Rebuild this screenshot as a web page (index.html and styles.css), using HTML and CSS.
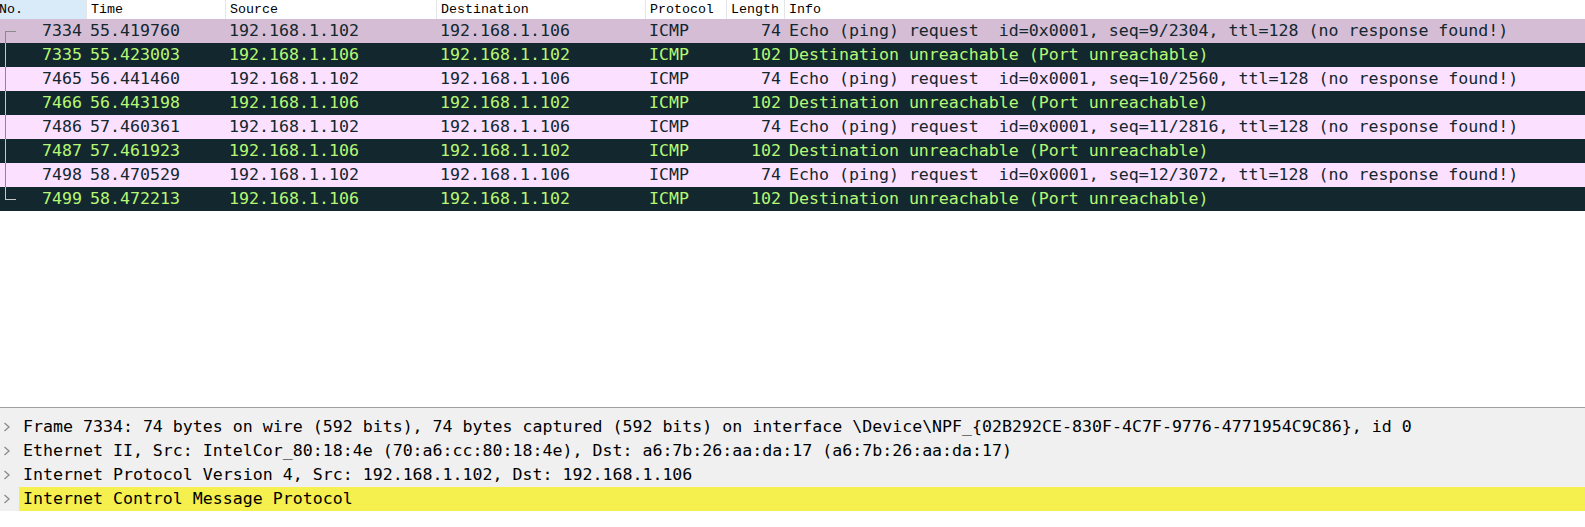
FILE: index.html
```html
<!DOCTYPE html>
<html>
<head>
<meta charset="utf-8">
<link rel="stylesheet" href="styles.css">
</head>
<body>
<div class="app">
  <div class="plist">
    <div class="phead">
      <div class="hc sorted">No.</div>
      <div class="hc">Time</div>
      <div class="hc">Source</div>
      <div class="hc">Destination</div>
      <div class="hc">Protocol</div>
      <div class="hc">Length</div>
      <div class="hc">Info</div>
    </div>
    <div class="prow sel">
      <div class="c num tree-first">7334</div><div class="c">55.419760</div><div class="c">192.168.1.102</div><div class="c">192.168.1.106</div><div class="c">ICMP</div><div class="c len">74</div><div class="c info">Echo (ping) request  id=0x0001, seq=9/2304, ttl=128 (no response found!)</div>
    </div>
    <div class="prow err">
      <div class="c num tree-mid">7335</div><div class="c">55.423003</div><div class="c">192.168.1.106</div><div class="c">192.168.1.102</div><div class="c">ICMP</div><div class="c len">102</div><div class="c info">Destination unreachable (Port unreachable)</div>
    </div>
    <div class="prow icmp">
      <div class="c num tree-mid">7465</div><div class="c">56.441460</div><div class="c">192.168.1.102</div><div class="c">192.168.1.106</div><div class="c">ICMP</div><div class="c len">74</div><div class="c info">Echo (ping) request  id=0x0001, seq=10/2560, ttl=128 (no response found!)</div>
    </div>
    <div class="prow err">
      <div class="c num tree-mid">7466</div><div class="c">56.443198</div><div class="c">192.168.1.106</div><div class="c">192.168.1.102</div><div class="c">ICMP</div><div class="c len">102</div><div class="c info">Destination unreachable (Port unreachable)</div>
    </div>
    <div class="prow icmp">
      <div class="c num tree-mid">7486</div><div class="c">57.460361</div><div class="c">192.168.1.102</div><div class="c">192.168.1.106</div><div class="c">ICMP</div><div class="c len">74</div><div class="c info">Echo (ping) request  id=0x0001, seq=11/2816, ttl=128 (no response found!)</div>
    </div>
    <div class="prow err">
      <div class="c num tree-mid">7487</div><div class="c">57.461923</div><div class="c">192.168.1.106</div><div class="c">192.168.1.102</div><div class="c">ICMP</div><div class="c len">102</div><div class="c info">Destination unreachable (Port unreachable)</div>
    </div>
    <div class="prow icmp">
      <div class="c num tree-mid">7498</div><div class="c">58.470529</div><div class="c">192.168.1.102</div><div class="c">192.168.1.106</div><div class="c">ICMP</div><div class="c len">74</div><div class="c info">Echo (ping) request  id=0x0001, seq=12/3072, ttl=128 (no response found!)</div>
    </div>
    <div class="prow err">
      <div class="c num tree-last">7499</div><div class="c">58.472213</div><div class="c">192.168.1.106</div><div class="c">192.168.1.102</div><div class="c">ICMP</div><div class="c len">102</div><div class="c info">Destination unreachable (Port unreachable)</div>
    </div>
  </div>
  <div class="splitter"></div>
  <div class="details">
    <div class="drow">
      <svg class="chev" width="19" height="24" viewBox="0 0 19 24"><polyline points="4.5,8 9,12 4.5,16" fill="none" stroke="#8a8a8a" stroke-width="1.3"/></svg>
      <span class="dtext">Frame 7334: 74 bytes on wire (592 bits), 74 bytes captured (592 bits) on interface \Device\NPF_{02B292CE-830F-4C7F-9776-4771954C9C86}, id 0</span>
    </div>
    <div class="drow">
      <svg class="chev" width="19" height="24" viewBox="0 0 19 24"><polyline points="4.5,8 9,12 4.5,16" fill="none" stroke="#8a8a8a" stroke-width="1.3"/></svg>
      <span class="dtext">Ethernet II, Src: IntelCor_80:18:4e (70:a6:cc:80:18:4e), Dst: a6:7b:26:aa:da:17 (a6:7b:26:aa:da:17)</span>
    </div>
    <div class="drow">
      <svg class="chev" width="19" height="24" viewBox="0 0 19 24"><polyline points="4.5,8 9,12 4.5,16" fill="none" stroke="#8a8a8a" stroke-width="1.3"/></svg>
      <span class="dtext">Internet Protocol Version 4, Src: 192.168.1.102, Dst: 192.168.1.106</span>
    </div>
    <div class="drow hl">
      <svg class="chev" width="19" height="24" viewBox="0 0 19 24"><polyline points="4.5,8 9,12 4.5,16" fill="none" stroke="#8a8a8a" stroke-width="1.3"/></svg>
      <span class="dtext">Internet Control Message Protocol</span>
    </div>
  </div>
</div>
</body>
</html>
```

FILE: styles.css
```css
html, body {
  margin: 0;
  padding: 0;
  background: #ffffff;
}
.app {
  width: 1585px;
  height: 527px;
  overflow: hidden;
  display: flex;
  flex-direction: column;
}
.plist {
  height: 407px;
  flex: none;
  background: #ffffff;
}
.phead, .prow {
  display: grid;
  grid-template-columns: 86px 139px 211px 209px 81px 58px 1fr;
}
.phead {
  height: 19px;
  font-family: "Liberation Mono", monospace;
  font-size: 13.3px;
  line-height: 19px;
  color: #000;
}
.hc {
  padding-left: 4px;
  border-left: 1px solid #e5e5e5;
  white-space: pre;
  overflow: hidden;
}
.hc.sorted {
  background: #d9ebf9;
  border-left: none;
  padding-left: 0;
  text-indent: -1px;
}
.prow {
  height: 24px;
  font-family: "DejaVu Sans Mono", monospace;
  font-size: 16.6px;
  line-height: 24px;
}
.c {
  white-space: pre;
  overflow: hidden;
  padding: 0 3px 0 4px;
}
.c.num, .c.len {
  text-align: right;
  padding: 0 3px 0 0;
}
.c.num {
  position: relative;
  padding-right: 4px;
}
.c.info {
  padding-left: 5px;
}
.prow.sel {
  background: #d5bdd6;
  color: #12272e;
}
.prow.icmp {
  background: #fce0ff;
  color: #12272e;
}
.prow.err {
  background: #12272e;
  color: #b7f774;
}
.tree-first::before, .tree-mid::before, .tree-last::before {
  content: "";
  position: absolute;
  left: 5px;
  width: 1px;
  background: #8a8a8a;
}
.prow.err .c.num::before {
  background: #c4c8c8;
}
.tree-first::before { top: 12px; bottom: 0; }
.tree-mid::before { top: 0; bottom: 0; }
.tree-last::before { top: 0; height: 13px; }
.tree-first::after, .tree-last::after {
  content: "";
  position: absolute;
  left: 5px;
  top: 12px;
  width: 11px;
  height: 1px;
  background: #8a8a8a;
}
.prow.err .tree-last::after {
  background: #c4c8c8;
}
.splitter {
  height: 1px;
  flex: none;
  background: #a0a0a0;
}
.details {
  flex: none;
  background: #f0f0f0;
  padding-top: 7px;
  font-family: "DejaVu Sans Mono", monospace;
  font-size: 16.6px;
  line-height: 24px;
  color: #000;
}
.drow {
  display: flex;
  height: 24px;
  align-items: center;
}
.chev {
  flex: none;
  display: block;
}
.dtext {
  flex: 1;
  white-space: pre;
  padding-left: 4px;
}
.drow.hl .dtext {
  background: #f5f04e;
}
```
